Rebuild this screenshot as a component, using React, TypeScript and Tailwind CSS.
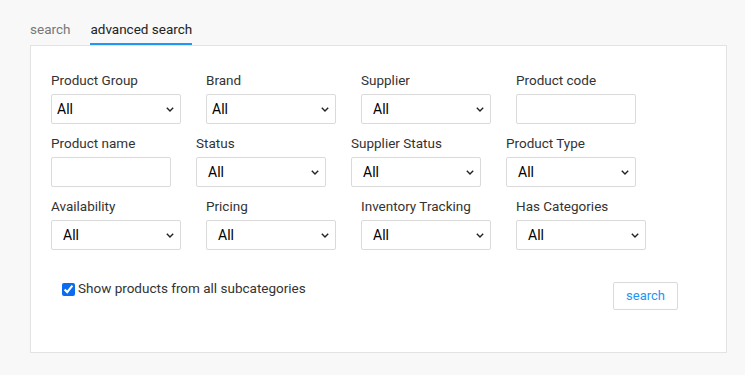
import { useState } from "react"

type Field = {
	label: string
	kind: "select" | "input"
	width: string
	pad?: string
}

const rows: Field[][] = [
	[
		{ label: "Product Group", kind: "select", width: "w-[130px]", pad: "pl-[5px]" },
		{ label: "Brand", kind: "select", width: "w-[130px]", pad: "pl-[5px]" },
		{ label: "Supplier", kind: "select", width: "w-[130px]", pad: "pl-[11px]" },
		{ label: "Product code", kind: "input", width: "w-[120px]" },
	],
	[
		{ label: "Product name", kind: "input", width: "w-[120px]" },
		{ label: "Status", kind: "select", width: "w-[130px]", pad: "pl-[11px]" },
		{ label: "Supplier Status", kind: "select", width: "w-[130px]", pad: "pl-[11px]" },
		{ label: "Product Type", kind: "select", width: "w-[130px]", pad: "pl-[11px]" },
	],
	[
		{ label: "Availability", kind: "select", width: "w-[130px]", pad: "pl-[11px]" },
		{ label: "Pricing", kind: "select", width: "w-[130px]", pad: "pl-[11px]" },
		{ label: "Inventory Tracking", kind: "select", width: "w-[130px]", pad: "pl-[11px]" },
		{ label: "Has Categories", kind: "select", width: "w-[130px]", pad: "pl-[11px]" },
	],
]

function Chevron() {
	return (
		<svg
			className="pointer-events-none absolute right-[7px] top-[13px]"
			width="8"
			height="5"
			viewBox="0 0 8 5"
			fill="none"
		>
			<path d="M0.8 0.8 L4 4 L7.2 0.8" stroke="#222" strokeWidth="1.4" />
		</svg>
	)
}

export default function App() {
	const [allSub, setAllSub] = useState(true)

	return (
		<div
			className="min-h-screen bg-[#f8f8f8] pl-[30px] pt-[19px] text-[#333]"
			style={{ fontFamily: "Roboto, 'Liberation Sans', sans-serif" }}
		>
			{/* Tabs */}
			<div className="flex gap-[20px] text-[13.5px] leading-[20px]">
				<span className="pb-[6px] text-[#777]">search</span>
				<span className="border-b-2 border-[#2196f3] pb-[3px] text-[#222]">
					advanced search
				</span>
			</div>

			{/* Panel */}
			<div className="w-[697px] border border-[#e3e3e3] bg-white pb-[42px] pl-[20px] pt-[24px]">
				<div className="flex flex-col gap-[9px]">
					{rows.map((row, ri) => (
						<div key={ri} className="flex gap-x-[25px]">
							{row.map((f) => (
								<div key={f.label} className="flex flex-col">
									<span className="mb-[4px] text-[13.5px] leading-[20px] text-[#333]">
										{f.label}
									</span>
									{f.kind === "select" ? (
										<div className={`relative ${f.width}`}>
											<select
												className={`h-[30px] w-full appearance-none rounded-[2px] border border-[#dadada] bg-white ${f.pad} text-[14px] text-black outline-none`}
												defaultValue="All"
											>
												<option>All</option>
											</select>
											<Chevron />
										</div>
									) : (
										<input
											className={`h-[30px] ${f.width} rounded-[2px] border border-[#dadada] bg-white px-[5px] text-[14px] outline-none`}
										/>
									)}
								</div>
							))}
						</div>
					))}
				</div>

				<div className="mt-[33px] flex items-start justify-between pr-[48px]">
					<label className="ml-[11px] flex items-center gap-[3px] text-[13.5px] leading-[13px] text-[#333]">
						<input
							type="checkbox"
							checked={allSub}
							onChange={(e) => setAllSub(e.target.checked)}
							className="m-0 h-[13px] w-[13px] accent-[#0b6cf0]"
						/>
						<span className="relative top-[-1px]">Show products from all subcategories</span>
					</label>
					<button className="-mt-[1px] h-[28px] w-[65px] rounded-[2px] border border-[#dadada] bg-white text-[13px] text-[#2196f3]">
						search
					</button>
				</div>
			</div>
		</div>
	)
}
